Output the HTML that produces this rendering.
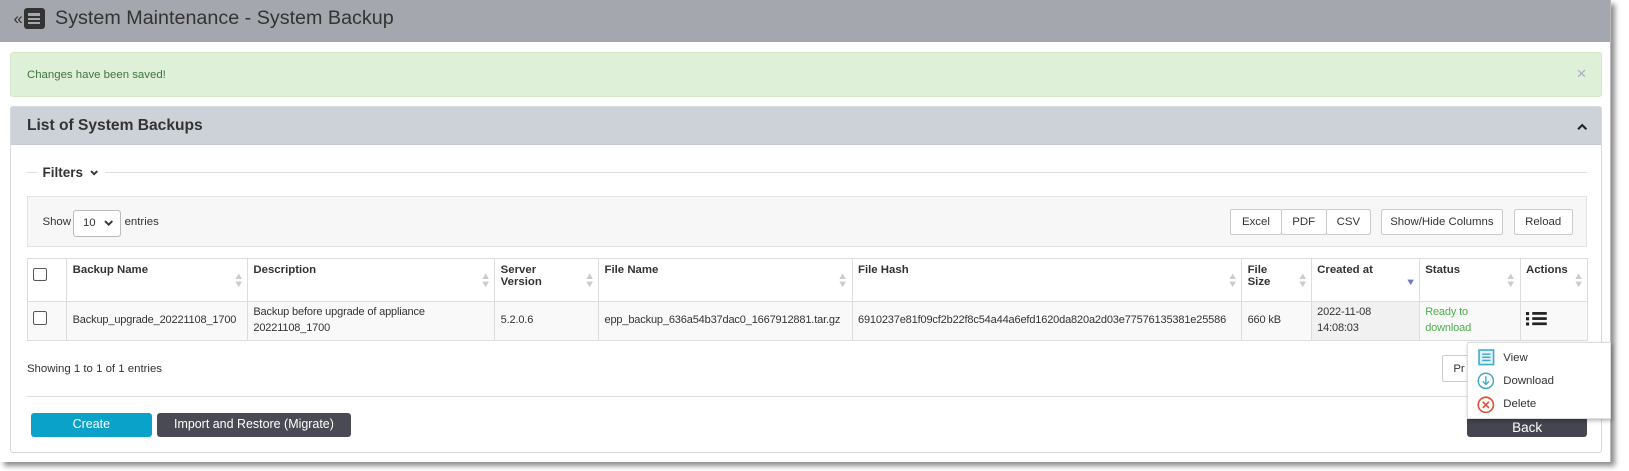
<!DOCTYPE html>
<html><head><meta charset="utf-8">
<style>
html{zoom:1.0389}
body{margin:0;background:#fff;font-family:"Liberation Sans",sans-serif;font-size:11px;color:#333;width:1568px;height:453px;overflow:hidden;position:relative}
.win{position:absolute;left:0;top:0;width:1550px;height:445px;background:#fff;border-right:1px solid #bbb;box-shadow:4px 4px 5px rgba(0,0,0,.45)}
.hdr{position:absolute;left:0;top:0;width:1550px;height:40px;background:#a5a7ae}
.hdr .t{position:absolute;left:53px;top:7px;font-size:19px;color:#333}
.hdr .ic{position:absolute;left:23px;top:8px;width:20px;height:20px;background:#333;border-radius:3px}
.hdr .ic i{position:absolute;left:4px;width:12px;height:2.5px;background:#a5a7ae}
.hdr .q{position:absolute;left:13px;top:9px;font-size:16px;color:#333}
.alert{position:absolute;left:10px;top:50px;width:1530px;height:41px;background:#dff0d8;border:1px solid #d3e8c8;border-radius:3px}
.alert span{position:absolute;left:15px;top:15px;color:#3c763d;font-size:11px}
.alert b{position:absolute;right:14px;top:11px;color:#aab;font-weight:normal;font-size:16px}
.panel{position:absolute;left:10px;top:102px;width:1530px;height:332px;border:1px solid #d5d8dc;border-radius:3px}
.ph{height:36px;background:#cdd2d9;border-bottom:1px solid #c5cad1}
.ph span{position:absolute;left:15px;top:10px;font-size:15px;font-weight:bold;color:#333}
.abs{position:absolute}
.tb{left:15px;top:86px;width:1500px;height:47px;background:#f7f7f7;border:1px solid #e3e3e3}
.btn{position:absolute;height:25px;border:1px solid #ccc;background:#fff;border-radius:2px;line-height:25px;text-align:center;font-size:11px;box-sizing:border-box}
table{position:absolute;left:15px;top:145px;width:1502px;border-collapse:collapse;font-size:11px;table-layout:fixed}
td,th{border:1px solid #ddd;padding:5px 5px;text-align:left;vertical-align:top;position:relative;overflow:hidden;white-space:nowrap}
th{height:31px;font-weight:bold}
tr.r td{background:#f9f9f9;height:29px;vertical-align:middle;padding:3px 5px;line-height:15px;font-size:10.6px;letter-spacing:-0.15px}
.s{position:absolute;right:4px;top:13px;color:#ccc;font-size:9px;line-height:8px;transform:scaleX(1.2)}
.cb{display:inline-block;width:11px;height:11px;border:1px solid #555;border-radius:2px;background:#fff}
.menu{left:1412px;top:329px;width:137px;height:72px;background:#fff;border:1px solid #ddd;box-shadow:1px 2px 4px rgba(0,0,0,.3)}
.menu div{position:absolute;left:34px;font-size:11px}
</style></head><body>
<div class="win">
 <div class="hdr"><span class="q">«</span><div class="ic"><i style="top:5px"></i><i style="top:9px"></i><i style="top:13px"></i></div><span class="t">System Maintenance - System Backup</span></div>
 <div class="alert"><span>Changes have been saved!</span><b>×</b></div>
 <div class="panel">
  <div class="ph"><span>List of System Backups</span>
   <svg class="abs" style="left:1507px;top:15px" width="10" height="7"><path d="M1 6l4-4 4 4" fill="none" stroke="#222" stroke-width="2"/></svg></div>
  <div class="abs" style="left:15px;top:63px;width:10px;border-top:1px solid #ddd"></div>
  <div class="abs" style="left:30px;top:56px;font-size:13px;font-weight:bold">Filters</div>
  <svg class="abs" style="left:76px;top:61px" width="8" height="6"><path d="M1 1l3 3 3-3" fill="none" stroke="#333" stroke-width="1.8"/></svg>
  <div class="abs" style="left:90px;top:63px;width:1427px;border-top:1px solid #ddd"></div>
  <div class="abs tb">
   <span class="abs" style="left:14px;top:18px">Show</span>
   <div class="abs" style="left:43px;top:12px;width:45px;height:24px;background:#fff;border:1px solid #bbb;border-radius:3px"><span class="abs" style="left:9px;top:6px">10</span><svg class="abs" style="left:29px;top:9px" width="9" height="6"><path d="M1 1l3.5 3.5 3.5-3.5" fill="none" stroke="#333" stroke-width="1.8"/></svg></div>
   <span class="abs" style="left:93px;top:18px">entries</span>
   <div class="btn" style="left:1157px;top:11px;width:50px">Excel</div>
   <div class="btn" style="left:1206px;top:11px;width:44px">PDF</div>
   <div class="btn" style="left:1249px;top:11px;width:44px">CSV</div>
   <div class="btn" style="left:1302px;top:11px;width:118px">Show/Hide Columns</div>
   <div class="btn" style="left:1430px;top:11px;width:57px">Reload</div>
  </div>
  <table>
   <colgroup><col style="width:38px"><col style="width:174px"><col style="width:238px"><col style="width:100px"><col style="width:244px"><col style="width:375px"><col style="width:67px"><col style="width:104px"><col style="width:97px"><col style="width:65px"></colgroup>
   <tr><th><span class="cb" style="margin-top:4px"></span></th><th>Backup Name<span class="s">▲<br>▼</span></th><th>Description<span class="s">▲<br>▼</span></th><th>Server<br>Version<span class="s">▲<br>▼</span></th><th>File Name<span class="s">▲<br>▼</span></th><th>File Hash<span class="s">▲<br>▼</span></th><th>File<br>Size<span class="s">▲<br>▼</span></th><th>Created at<span class="s" style="color:#6f7bc9;top:19px">▼</span></th><th>Status<span class="s">▲<br>▼</span></th><th>Actions<span class="s">▲<br>▼</span></th></tr>
   <tr class="r"><td><span class="cb"></span></td><td>Backup_upgrade_20221108_1700</td><td>Backup before upgrade of appliance<br>20221108_1700</td><td>5.2.0.6</td><td>epp_backup_636a54b37dac0_1667912881.tar.gz</td><td>6910237e81f09cf2b22f8c54a44a6efd1620da820a2d03e77576135381e25586</td><td>660 kB</td><td style="background:#f1f1f1">2022-11-08<br>14:08:03</td><td style="color:#4cae4c">Ready to<br>download</td><td style="vertical-align:top"><svg style="margin-top:6px" width="21" height="14"><rect x="0" y="1" width="3" height="3" fill="#222"/><rect x="0" y="6" width="3" height="3" fill="#222"/><rect x="0" y="11" width="3" height="3" fill="#222"/><rect x="6" y="1" width="14" height="2.6" fill="#222"/><rect x="6" y="6" width="14" height="2.6" fill="#222"/><rect x="6" y="11" width="14" height="2.6" fill="#222"/></svg></td></tr>
  </table>
  <span class="abs" style="left:15px;top:246px">Showing 1 to 1 of 1 entries</span>
  <div class="btn" style="left:1377px;top:239px;width:40px;height:26px;text-align:left;padding-left:10px;line-height:26px">Pr</div>
  <div class="abs" style="left:15px;top:278px;width:1503px;border-top:1px solid #ddd"></div>
  <div class="abs" style="left:19px;top:295px;width:116px;height:23px;background:#0aa2c9;color:#fff;border-radius:3px;text-align:center;line-height:23px;font-size:12px">Create</div>
  <div class="abs" style="left:140px;top:295px;width:187px;height:23px;background:#4a4a55;color:#fff;border-radius:3px;text-align:center;line-height:23px;font-size:12px">Import and Restore (Migrate)</div>
  <div class="abs" style="left:1401px;top:295px;width:116px;height:23px;background:#45454f;color:#fff;border-radius:3px;text-align:center;line-height:28px;font-size:13px">Back</div>
 </div>
 <div class="abs menu">
  <svg class="abs" style="left:10px;top:6px" width="16" height="16"><rect x="1" y="1" width="14" height="14" fill="#dff1f7" stroke="#3fa9c9" stroke-width="1.5"/><path d="M4 5h8M4 8h8M4 11h8" stroke="#3fa9c9" stroke-width="1.3"/></svg>
  <div style="top:9px">View</div>
  <svg class="abs" style="left:9px;top:28px" width="17" height="17"><circle cx="8.5" cy="8.5" r="7.3" fill="none" stroke="#3fa9c9" stroke-width="1.4"/><path d="M8.5 4v8M5.5 9l3 3 3-3" fill="none" stroke="#3fa9c9" stroke-width="1.3"/></svg>
  <div style="top:31px">Download</div>
  <svg class="abs" style="left:9px;top:51px" width="17" height="17"><circle cx="8.5" cy="8.5" r="7.3" fill="none" stroke="#e0533a" stroke-width="1.6"/><path d="M5.5 5.5l6 6M11.5 5.5l-6 6" stroke="#e0533a" stroke-width="1.6"/></svg>
  <div style="top:53px">Delete</div>
 </div>
</div>
</body></html>
